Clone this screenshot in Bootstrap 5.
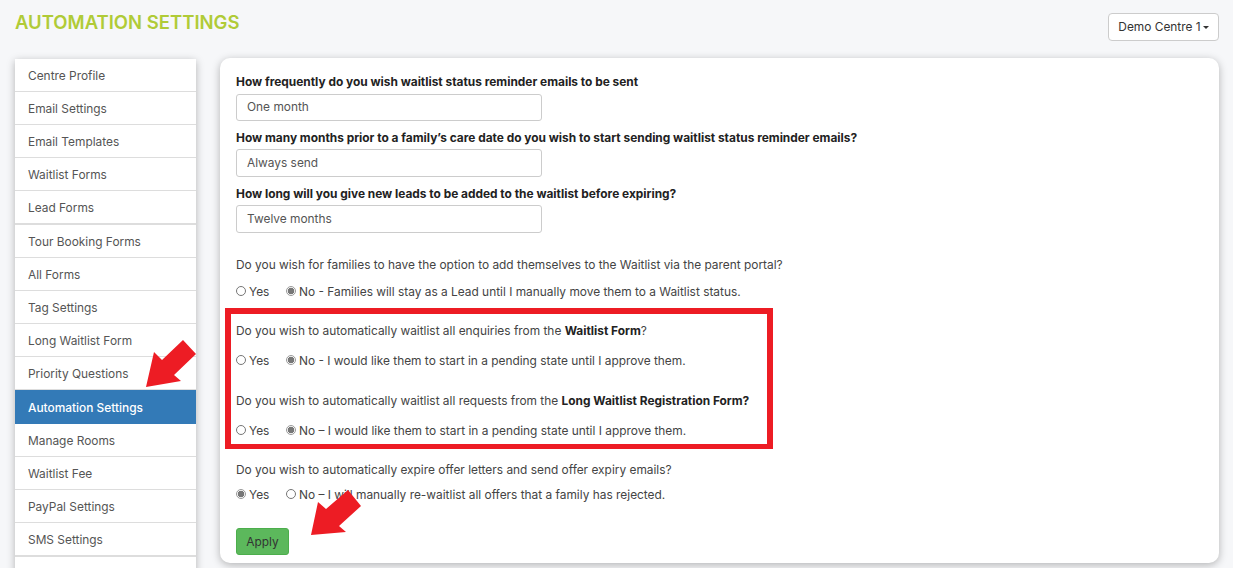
<!DOCTYPE html>
<html lang="en">
  <head>
    <meta charset="UTF-8" />
    <meta name="viewport" content="width=device-width, initial-scale=1.0" />
    <title>Automation Settings</title>
    <link
      href="https://cdn.jsdelivr.net/npm/bootstrap@5.3.0/dist/css/bootstrap.min.css"
      rel="stylesheet"
    />
    <style>
      html, body { height: 568px; overflow: hidden; }
      body {
        background: #f6f7f9;
        color: #444;
        font-family: Inter, "Liberation Sans", sans-serif;
        font-size: 11.9px;
        position: relative;
      }
      .page-head { height: 58px; padding: 11px 14px 0 15px; }
      .page-title { color: #b0cb37; font-size: 18.5px; font-weight: 600; margin: 0; line-height: 22px; }
      .centre-btn {
        background: #fff; border: 1px solid #ccc; border-radius: 4px; color: #333;
        font-size: 11.9px; height: 28px; padding: 0 9px; width: 111px; margin-top: 2px;
        display: flex; align-items: center; justify-content: center; gap: 2px;
      }
      .centre-caret { border-top: 3.5px solid #333; border-left: 3.5px solid transparent; border-right: 3.5px solid transparent; }
      .side-col { width: 181px; margin-left: 15px; margin-top: 1px; flex: none; }
      .side-list { border-radius: 3px; box-shadow: 0 2px 8px rgba(0,0,0,.28); }
      .side-list .list-group-item {
        border: 0; border-bottom: 1px solid #ddd; color: #555; font-size: 11.9px;
        height: 33px; padding: 1px 13px 0; display: flex; align-items: center; background: #fff;
      }
      .side-list .list-group-item.thick { border-bottom-width: 2px; height: 34px; }
      .side-list .list-group-item.active {
        background: #337ab7; color: #fff; height: 34px; font-weight: 500; border-bottom: 0; margin-top: 0;
      }
      .main-card {
        background: #fff; border-radius: 10px; box-shadow: 0 2px 8px rgba(0,0,0,.28);
        width: 999px; height: 505px; margin-left: 24px; padding: 15px 16px 0;
      }
      .q-bold { color: #222; font-weight: 700; height: 17px; line-height: 17px; margin: 0; font-size: 11.9px; }
      .q-input {
        width: 306px; height: 28px; border: 1px solid #ccc; border-radius: 3px; color: #555;
        font-size: 11.9px; padding: 0 10px; display: flex; align-items: center; margin: 3px 0 8px;
      }
      .q-input.first { height: 27px; margin-top: 4px; padding-bottom: 1px; }
      .q-line { line-height: 17px; margin: 0; color: #444; }
      .q-line b { color: #222; }
      .q-portal { margin-top: 23px; }
      .radio-row { display: flex; align-items: center; height: 17px; margin-top: 10px; color: #444; }
      .radio-row.wide-gap { margin-top: 13px; }
      .radio-row.tight-gap { margin-top: 8px; }
      .radio-row .form-check-input {
        width: 10px; height: 10px; margin: -2px 3px 0 0; border: 1px solid #767676; background-image: none; flex: none;
      }
      .radio-row .form-check-input:checked {
        background: radial-gradient(circle, #777 0 3px, #fff 3.6px); border-color: #999;
      }
      .radio-yes { width: 50px; display: flex; align-items: center; }
      .red-frame {
        border: 6px solid #ed1c24; border-bottom-width: 5px; width: 548px; height: 141px;
        margin: 8px 0 0 -11px; padding: 8px 5px 0;
      }
      .q-second { margin-top: 23px; }
      .q-expire { margin-top: 12px; }
      .apply-btn {
        background: #5cb85c; border: 1px solid #4cae4c; color: #333; font-size: 11.9px;
        width: 53px; height: 27px; padding: 1px 0 0; border-radius: 3px; display: block; margin-top: 25px;
      }
      .red-arrow { position: absolute; width: 62px; height: 56px; }
    </style>
  </head>
  <body>
    <div class="page-head d-flex justify-content-between align-items-start">
      <h1 class="page-title">AUTOMATION SETTINGS</h1>
      <button class="centre-btn" type="button">Demo Centre 1<span class="centre-caret"></span></button>
    </div>

    <div class="d-flex">
      <div class="side-col">
        <div class="list-group rounded-0 side-list">
          <a class="list-group-item">Centre Profile</a>
          <a class="list-group-item">Email Settings</a>
          <a class="list-group-item">Email Templates</a>
          <a class="list-group-item">Waitlist Forms</a>
          <a class="list-group-item thick">Lead Forms</a>
          <a class="list-group-item">Tour Booking Forms</a>
          <a class="list-group-item">All Forms</a>
          <a class="list-group-item">Tag Settings</a>
          <a class="list-group-item">Long Waitlist Form</a>
          <a class="list-group-item">Priority Questions</a>
          <a class="list-group-item active">Automation Settings</a>
          <a class="list-group-item">Manage Rooms</a>
          <a class="list-group-item">Waitlist Fee</a>
          <a class="list-group-item">PayPal Settings</a>
          <a class="list-group-item thick">SMS Settings</a>
          <a class="list-group-item">&nbsp;</a>
        </div>
      </div>

      <div class="main-card">
        <p class="q-bold">How frequently do you wish waitlist status reminder emails to be sent</p>
        <div class="q-input first">One month</div>
        <p class="q-bold">How many months prior to a family’s care date do you wish to start sending waitlist status reminder emails?</p>
        <div class="q-input">Always send</div>
        <p class="q-bold">How long will you give new leads to be added to the waitlist before expiring?</p>
        <div class="q-input">Twelve months</div>

        <p class="q-line q-portal">Do you wish for families to have the option to add themselves to the Waitlist via the parent portal?</p>
        <div class="radio-row">
          <label class="radio-yes"><input class="form-check-input" type="radio" name="q1" />Yes</label>
          <label class="d-flex align-items-center"><input class="form-check-input" type="radio" name="q1" checked />No - Families will stay as a Lead until I manually move them to a Waitlist status.</label>
        </div>

        <div class="red-frame">
          <p class="q-line">Do you wish to automatically waitlist all enquiries from the <b>Waitlist Form</b>?</p>
          <div class="radio-row wide-gap">
            <label class="radio-yes"><input class="form-check-input" type="radio" name="q2" />Yes</label>
            <label class="d-flex align-items-center"><input class="form-check-input" type="radio" name="q2" checked />No - I would like them to start in a pending state until I approve them.</label>
          </div>
          <p class="q-line q-second">Do you wish to automatically waitlist all requests from the <b>Long Waitlist Registration Form?</b></p>
          <div class="radio-row wide-gap">
            <label class="radio-yes"><input class="form-check-input" type="radio" name="q3" />Yes</label>
            <label class="d-flex align-items-center"><input class="form-check-input" type="radio" name="q3" checked />No – I would like them to start in a pending state until I approve them.</label>
          </div>
        </div>

        <p class="q-line q-expire">Do you wish to automatically expire offer letters and send offer expiry emails?</p>
        <div class="radio-row tight-gap">
          <label class="radio-yes"><input class="form-check-input" type="radio" name="q4" checked />Yes</label>
          <label class="d-flex align-items-center"><input class="form-check-input" type="radio" name="q4" />No – I will manually re-waitlist all offers that a family has rejected.</label>
        </div>

        <button class="apply-btn" type="button">Apply</button>
      </div>
    </div>

    <!-- annotation arrows over the page -->
    <svg class="red-arrow" style="left:140px;top:335px" viewBox="0 0 62 56">
      <polygon points="6,52 14,17 22,25 43,5 56,19 34,40 41,46" fill="#ed1c24" />
    </svg>
    <svg class="red-arrow" style="left:305px;top:485px" viewBox="0 0 62 56">
      <polygon points="6,50 13,17 21,24 43,5 56,21 34,41 41,47" fill="#ed1c24" />
    </svg>

    <script src="https://cdn.jsdelivr.net/npm/bootstrap@5.3.0/dist/js/bootstrap.bundle.min.js"></script>
  </body>
</html>
